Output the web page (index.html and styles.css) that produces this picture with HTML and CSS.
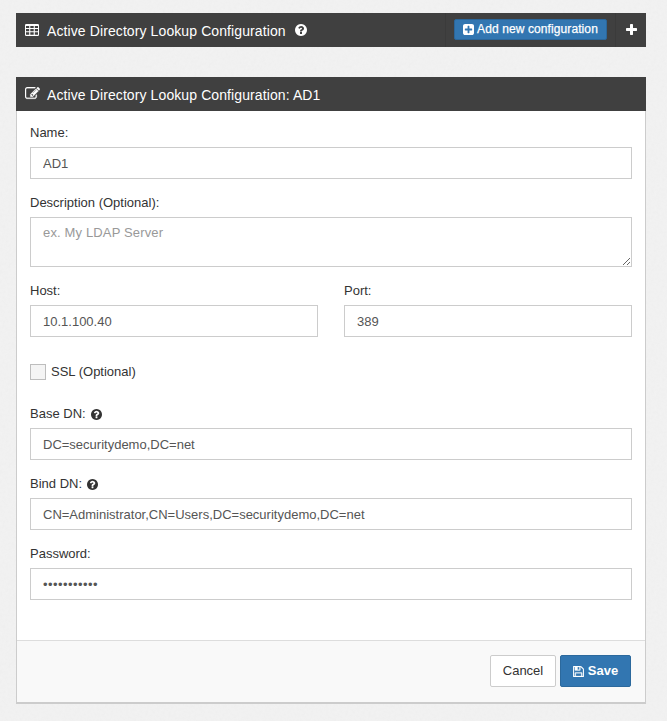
FILE: index.html
```html
<!DOCTYPE html>
<html lang="en">
<head>
<meta charset="utf-8">
<title>Active Directory Lookup Configuration</title>
<link rel="stylesheet" href="styles.css">
</head>
<body>
<svg class="defs" aria-hidden="true">
  <symbol id="table" viewBox="0 0 14 12"><path fill-rule="evenodd" d="M1.2 0h11.6q1.2 0 1.2 1.2v9.6q0 1.2-1.2 1.2H1.200q-1.200 0-1.200-1.200V1.200Q0 0 1.200 0zM1 2h3.200v2H1zm4.300 0h3.400v2H5.300zm4.500 0H13v2H9.800zM1 5h3.200v2.200H1zm4.300 0h3.400v2.200H5.300zm4.500 0H13v2.200H9.800zM1 8.300h3.200v2.400H1zm4.300 0h3.400v2.400H5.300zm4.500 0H13v2.400H9.800z"/></symbol>
  <symbol id="help" viewBox="128 128 1536 1536"><path d="M1024 1376v-192q0-14-9-23t-23-9h-192q-14 0-23 9t-9 23v192q0 14 9 23t23 9h192q14 0 23-9t9-23zm256-672q0-88-55.500-163t-138.500-116-170-41q-243 0-371 213-15 24 8 42l132 100q7 6 19 6 16 0 25-12 53-68 86-92 34-24 86-24 48 0 85.500 26t37.500 59q0 38-20 61t-68 45q-63 28-115.500 86.500t-52.500 125.500v36q0 14 9 23t23 9h192q14 0 23-9t9-23q0-19 21.500-49.500t54.500-49.500q32-18 49-28.500t46-35 44.500-48 28-60.500 12.500-81zm384 192q0 209-103 385.500t-279.500 279.500-385.500 103-385.500-103-279.500-279.500-103-385.500 103-385.500 279.500-279.500 385.500-103 385.500 103 279.500 279.500 103 385.500z"/></symbol>
  <symbol id="plus-square" viewBox="128 128 1536 1536"><path d="M1408 960v-128q0-26-19-45t-45-19h-320v-320q0-26-19-45t-45-19h-128q-26 0-45 19t-19 45v320h-320q-26 0-45 19t-19 45v128q0 26 19 45t45 19h320v320q0 26 19 45t45 19h128q26 0 45-19t19-45v-320h320q26 0 45-19t19-45zm256-544v960q0 119-84.500 203.500t-203.500 84.500h-960q-119 0-203.500-84.500t-84.500-203.500v-960q0-119 84.500-203.500t203.500-84.500h960q119 0 203.500 84.500t84.500 203.500z"/></symbol>
  <symbol id="plus" viewBox="192 128 1408 1408"><path d="M1600 736v192q0 40-28 68t-68 28h-416v416q0 40-28 68t-68 28h-192q-40 0-68-28t-28-68v-416h-416q-40 0-68-28t-28-68v-192q0-40 28-68t68-28h416v-416q0-40 28-68t68-28h192q40 0 68 28t28 68v416h416q40 0 68 28t28 68z"/></symbol>
  <symbol id="edit" viewBox="0 128 1792 1536"><path d="M888 1184l116-116-152-152-116 116v56h96v96h56zm440-720q-16-16-33 1l-350 350q-17 17-1 33t33-1l350-350q17-17 1-33zm80 594v190q0 119-84.500 203.500t-203.500 84.500h-832q-119 0-203.500-84.500t-84.500-203.500v-832q0-119 84.500-203.500t203.500-84.500h832q63 0 117 25 15 7 18 23 3 17-9 29l-49 49q-14 14-32 8-23-6-45-6h-832q-66 0-113 47t-47 113v832q0 66 47 113t113 47h832q66 0 113-47t47-113v-126q0-13 9-22l64-64q15-15 35-7t20 29zm-96-738l288 288-672 672h-288v-288zm444 132l-92 92-288-288 92-92q28-28 68-28t68 28l152 152q28 28 28 68t-28 68z"/></symbol>
  <symbol id="save" viewBox="128 128 1536 1536"><path d="M512 1536h768v-384h-768v384zm896 0h128v-896q0-14-10-38.500t-20-34.500l-281-281q-10-10-34-20t-39-10v416q0 40-28 68t-68 28h-576q-40 0-68-28t-28-68v-416h-128v1280h128v-416q0-40 28-68t68-28h832q40 0 68 28t28 68v416zm-384-928v-320q0-13-9.500-22.500t-22.500-9.500h-192q-13 0-22.500 9.500t-9.500 22.500v320q0 13 9.500 22.500t22.500 9.500h192q13 0 22.500-9.500t9.500-22.500zm640 32v928q0 40-28 68t-68 28h-1344q-40 0-68-28t-28-68v-1344q0-40 28-68t68-28h928q40 0 88 20t76 48l280 280q28 28 48 76t20 88z"/></symbol>
</svg>

<header class="bar">
  <svg class="icon-table"><use href="#table"/></svg>
  <h1 class="title">Active Directory Lookup Configuration</h1>
  <svg class="icon-help-title"><use href="#help"/></svg>
  <div class="bar-action">
    <button class="btn-add"><svg class="icon-add"><use href="#plus-square"/></svg><span>Add new configuration</span></button>
  </div>
  <button class="bar-plus" aria-label="Expand"><svg class="icon-plus"><use href="#plus"/></svg></button>
</header>

<section class="panel">
  <div class="bar">
    <svg class="icon-edit"><use href="#edit"/></svg>
    <h2 class="title">Active Directory Lookup Configuration: AD1</h2>
  </div>
  <form class="form">
    <div class="fields">
      <div class="field">
        <label class="label" for="name">Name:</label>
        <input class="input" id="name" type="text" value="AD1">
      </div>
      <div class="field">
        <label class="label" for="description">Description (Optional):</label>
        <textarea class="input textarea" id="description" placeholder="ex. My LDAP Server"></textarea>
      </div>
      <div class="row">
        <div class="field">
          <label class="label" for="host">Host:</label>
          <input class="input" id="host" type="text" value="10.1.100.40">
        </div>
        <div class="field">
          <label class="label" for="port">Port:</label>
          <input class="input" id="port" type="text" value="389">
        </div>
      </div>
      <label class="check"><input class="checkbox" type="checkbox"><span>SSL (Optional)</span></label>
      <div class="field">
        <label class="label" for="base">Base DN:<svg class="icon-help"><use href="#help"/></svg></label>
        <input class="input" id="base" type="text" value="DC=securitydemo,DC=net">
      </div>
      <div class="field">
        <label class="label" for="bind">Bind DN:<svg class="icon-help"><use href="#help"/></svg></label>
        <input class="input" id="bind" type="text" value="CN=Administrator,CN=Users,DC=securitydemo,DC=net">
      </div>
      <div class="field">
        <label class="label" for="password">Password:</label>
        <input class="input password" id="password" type="password" value="password123">
      </div>
    </div>
    <footer class="footer">
      <button class="btn btn-cancel" type="button">Cancel</button>
      <button class="btn btn-save" type="button"><svg class="icon-save"><use href="#save"/></svg><span>Save</span></button>
    </footer>
  </form>
</section>
</body>
</html>
```
FILE: styles.css
```css
* {
  box-sizing: border-box;
}

body {
  margin: 0;
  padding: 13px 21px 0 16px;
  background: #efefef url("data:image/svg+xml,%3Csvg xmlns='http://www.w3.org/2000/svg' width='200' height='200'%3E%3Cfilter id='n'%3E%3CfeTurbulence type='fractalNoise' baseFrequency='.35' numOctaves='2' stitchTiles='stitch'/%3E%3CfeColorMatrix type='saturate' values='0'/%3E%3C/filter%3E%3Crect width='200' height='200' filter='url(%23n)' opacity='.045'/%3E%3C/svg%3E");
  background-color: #f2f2f2;
  color: #333;
  font: 13px/18px "Liberation Sans", Arial, sans-serif;
}

svg {
  flex: none;
  fill: currentColor;
}

.defs {
  display: none;
}

.bar {
  display: flex;
  align-items: center;
  height: 34px;
  padding-left: 9px;
  background: #404040;
  color: #fff;
}

.title {
  margin: 2px 0 0;
  font-size: 14px;
  font-weight: 400;
  letter-spacing: 0.1px;
  white-space: nowrap;
}

.icon-table {
  width: 14px;
  height: 12px;
  margin-right: 8px;
  margin-bottom: 0;
}

.icon-edit {
  width: 15px;
  height: 13px;
  margin-right: 7px;
  margin-bottom: 1px;
  stroke: currentColor;
  stroke-width: 30px;
}

.icon-help-title {
  width: 12px;
  height: 12px;
  margin-left: 9px;
}

.bar-action {
  display: flex;
  align-items: center;
  align-self: stretch;
  margin-left: auto;
  padding: 0 8px 2px;
  border-left: 1px solid #3b3b3b;
  border-right: 1px solid #3b3b3b;
}

.btn-add {
  display: flex;
  align-items: center;
  justify-content: center;
  gap: 3px;
  width: 153px;
  height: 21px;
  padding: 0;
  border: 1px solid #2b669a;
  border-radius: 2px;
  background: #3276b1;
  color: #fff;
  font: 12px/18px "Liberation Sans", Arial, sans-serif;
  letter-spacing: 0.1px;
  -webkit-text-stroke: 0.25px #fff;
}

.icon-add {
  width: 11px;
  height: 11px;
}

.bar-plus {
  display: flex;
  align-items: center;
  justify-content: center;
  width: 30px;
  height: 34px;
  padding: 0 0 1px;
  border: 0;
  background: none;
  color: #fff;
}

.icon-plus {
  width: 11px;
  height: 11px;
}

.panel {
  margin-top: 30px;
}

.form {
  border: solid #ccc;
  border-width: 0 1px 2px;
  background: #fff;
}

.fields {
  display: flex;
  flex-direction: column;
  gap: 13px;
  height: 529px;
  padding: 13px 13px 0;
}

.field {
  display: flex;
  flex: none;
  flex-direction: column;
  gap: 5px;
}

.row {
  display: grid;
  grid-template-columns: 1fr 1fr;
  gap: 26px;
}

.label {
  display: flex;
  align-items: center;
  gap: 5px;
  height: 18px;
}

.icon-help {
  width: 11px;
  height: 11px;
}

.field + .field,
.field + .row {
  margin-top: 2px;
}

.input {
  display: block;
  width: 100%;
  height: 32px;
  margin: 0;
  padding: 6px 12px;
  border: 1px solid #ccc;
  border-radius: 0;
  outline: 0;
  background: #fff;
  color: #555;
  font: 13px/18px "Liberation Sans", Arial, sans-serif;
}

.textarea {
  height: 50px;
  letter-spacing: 0.15px;
  resize: vertical;
}

.textarea::placeholder {
  color: #999;
}

.password {
  letter-spacing: 0.45px;
}

.row .field + .field {
  margin-top: 0;
}

.check {
  display: flex;
  align-items: center;
  gap: 5px;
  margin: 13px 0 11px;
}

.checkbox {
  width: 16px;
  height: 16px;
  margin: 0;
  border: 1px solid #bdbdbd;
  appearance: none;
  background: #f4f4f4;
}

.footer {
  display: flex;
  justify-content: flex-end;
  gap: 4px;
  height: 62px;
  padding: 14px 14px 0;
  border-top: 1px solid #ddd;
  background: #f9f9f9;
}

.btn {
  display: flex;
  align-items: center;
  justify-content: center;
  gap: 4px;
  height: 32px;
  padding: 0;
  border: 1px solid #ccc;
  border-radius: 2px;
  font: 13px/18px "Liberation Sans", Arial, sans-serif;
}

.btn-cancel {
  width: 66px;
  background: #fff;
  color: #333;
}

.btn-save {
  width: 71px;
  border-color: #2c699d;
  background: #3276b1;
  color: #fff;
  font-weight: 700;
}

.icon-save {
  width: 11px;
  height: 11px;
  stroke: currentColor;
  stroke-width: 40px;
}
```
